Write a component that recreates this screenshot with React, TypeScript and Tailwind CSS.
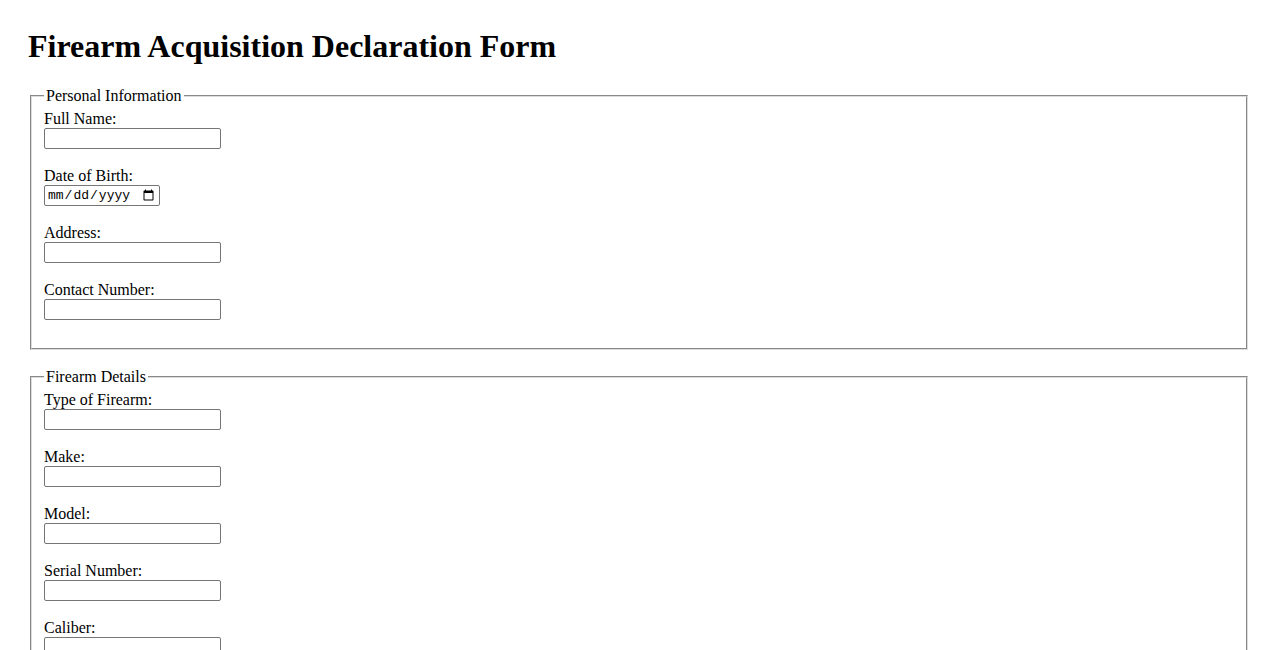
import React from 'react';

const personalFields = [
  { id: 'fullName', label: 'Full Name:', type: 'text' },
  { id: 'dob', label: 'Date of Birth:', type: 'date' },
  { id: 'address', label: 'Address:', type: 'text' },
  { id: 'contact', label: 'Contact Number:', type: 'text' },
];

const firearmFields = [
  { id: 'firearmType', label: 'Type of Firearm:', type: 'text' },
  { id: 'make', label: 'Make:', type: 'text' },
  { id: 'model', label: 'Model:', type: 'text' },
  { id: 'serial', label: 'Serial Number:', type: 'text' },
  { id: 'caliber', label: 'Caliber:', type: 'text' },
];

const purposeFields = [
  { id: 'purpose', label: 'Purpose of Acquisition:', type: 'text' },
  { id: 'dealer', label: 'Dealer Name:', type: 'text' },
  { id: 'acqDate', label: 'Date of Acquisition:', type: 'date' },
];

type Field = { id: string; label: string; type: string };

function FieldGroup({ field }: { field: Field }) {
  return (
    <div className="flex flex-col items-start mb-[18px]">
      <label htmlFor={field.id} className="h-[18px] leading-[18px]">
        {field.label}
      </label>
      {field.type === 'date' ? (
        <input
          id={field.id}
          type="date"
          className="w-[116px] h-[21px] border border-[#767676] rounded-[2px] px-[2px] text-[13px] bg-white text-black"
          style={{ fontFamily: '"Liberation Mono", "DejaVu Sans Mono", monospace' }}
        />
      ) : (
        <input
          id={field.id}
          type="text"
          className="w-[177px] h-[21px] border border-[#767676] rounded-[2px] px-[2px] text-[13px] bg-white"
        />
      )}
    </div>
  );
}

function Section({ title, fields }: { title: string; fields: Field[] }) {
  return (
    <fieldset className="mx-[2px] border-2 [border-style:groove] border-[#dcdcdc] px-[12px] pt-[5px] pb-[10px]">
      <legend className="px-[2px] leading-[18px]">{title}</legend>
      {fields.map((f) => (
        <FieldGroup key={f.id} field={f} />
      ))}
    </fieldset>
  );
}

export default function App() {
  return (
    <div
      className="min-h-screen bg-white text-black text-[16px] px-[28px] pb-[28px]"
      style={{ fontFamily: '"Liberation Serif", "Times New Roman", serif' }}
    >
      <h1 className="text-[32px] font-bold leading-[36px] pt-[28px] mb-[23px]">
        Firearm Acquisition Declaration Form
      </h1>
      <form className="flex flex-col gap-[18px]">
        <Section title="Personal Information" fields={personalFields} />
        <Section title="Firearm Details" fields={firearmFields} />
        <Section title="Acquisition Details" fields={purposeFields} />
        <div>
          <button
            type="submit"
            className="border border-[#767676] bg-[#efefef] rounded-[2px] px-[6px] py-[1px] text-[13px]"
          >
            Submit Declaration
          </button>
        </div>
      </form>
    </div>
  );
}
